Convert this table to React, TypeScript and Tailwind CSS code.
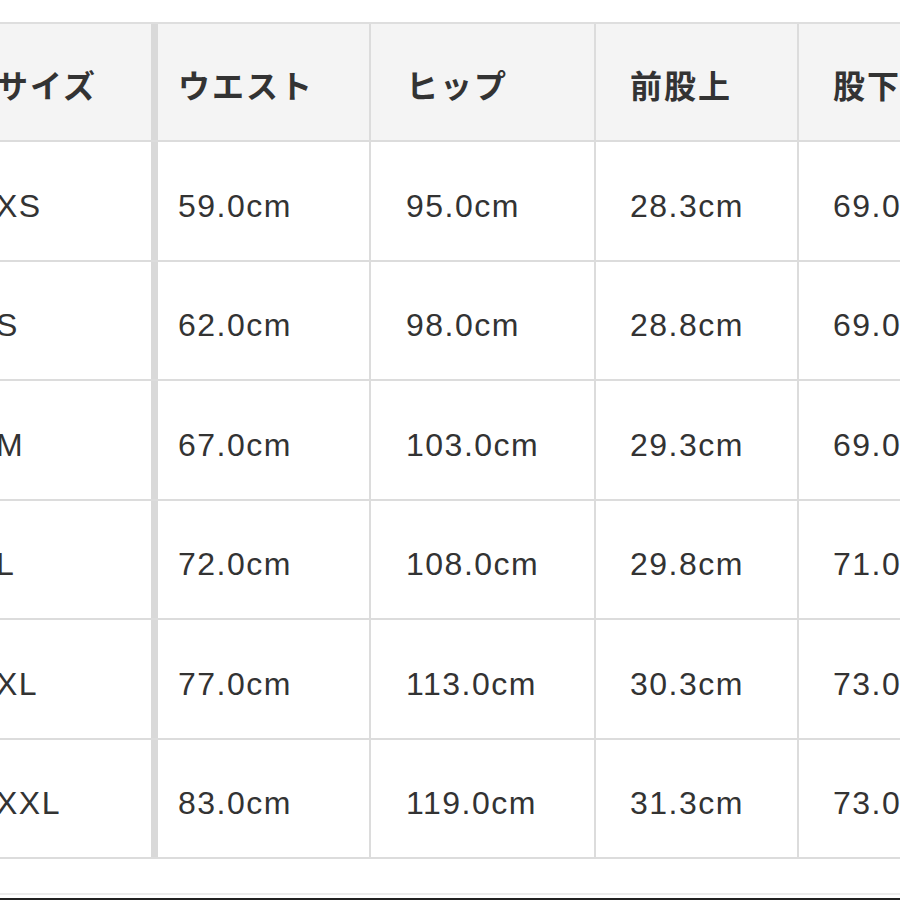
import React from "react";

const rows = [
  ["XS", "59.0cm", "95.0cm", "28.3cm", "69.0cm"],
  ["S", "62.0cm", "98.0cm", "28.8cm", "69.0cm"],
  ["M", "67.0cm", "103.0cm", "29.3cm", "69.0cm"],
  ["L", "72.0cm", "108.0cm", "29.8cm", "71.0cm"],
  ["XL", "77.0cm", "113.0cm", "30.3cm", "73.0cm"],
  ["XXL", "83.0cm", "119.0cm", "31.3cm", "73.0cm"],
];

const headers = ["サイズ", "ウエスト", "ヒップ", "前股上", "股下"];
const cellCls = [
  "w-[180px] pl-[18px] border-r-[7px] border-[#d9d9d9]",
  "w-[213px] pl-[20px] border-r-2 border-[#dcdcdc]",
  "w-[225px] pl-[35px] border-r-2 border-[#dcdcdc]",
  "w-[203px] pl-[34px] border-r-2 border-[#dcdcdc]",
  "w-[200px] pl-[34px]",
];

export default function App() {
  return (
    <div className="w-[900px] h-[900px] overflow-hidden bg-white relative" style={{ fontFamily: '"Liberation Sans", Arial, "Noto Sans CJK JP", sans-serif' }}>
      <div className="pt-[22px] ml-[-22px] w-[1020px]">
        <div className="border-t-2 border-[#dedede]">
          <div className="flex h-[118px] bg-[#f4f4f4] border-b-2 border-[#dcdcdc]">
            {headers.map((h, i) => (
              <div key={h} className={`${cellCls[i]} shrink-0 flex items-center pt-[3px]`}>
                <span className="text-[32px] font-bold text-[#333] tracking-[2px] whitespace-nowrap" style={{ fontFamily: '"Noto Sans CJK JP", sans-serif' }}>
                  {h}
                </span>
              </div>
            ))}
          </div>
          {rows.map((r) => (
            <div key={r[0]} className="flex h-[119.5px] border-b-2 border-[#dcdcdc]">
              {r.map((c, i) => (
                <div key={i} className={`${cellCls[i]} shrink-0 flex items-center pt-[10px]`}>
                  <span className="text-[32px] text-[#333] tracking-[1.5px] whitespace-nowrap">{c}</span>
                </div>
              ))}
            </div>
          ))}
        </div>
      </div>
      <div className="absolute left-0 right-0 top-[893px] h-[2px] bg-[#ececec]" />
      <div className="absolute left-0 right-0 top-[898px] h-[2px] bg-[#222]" />
    </div>
  );
}
